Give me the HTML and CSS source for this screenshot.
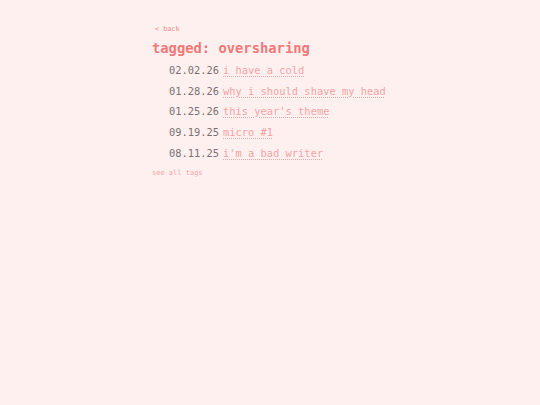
FILE: index.html
```html
<!DOCTYPE html>
<html>
<head>
<meta charset="utf-8">
<link rel="stylesheet" href="styles.css">
</head>
<body>
<main class="page">
  <a class="back" href="#">&lt; back</a>
  <h1 class="title">tagged: oversharing</h1>
  <ul class="posts">
    <li class="post"><span class="date">02.02.26</span><a class="link" href="#">i have a cold</a></li>
    <li class="post"><span class="date">01.28.26</span><a class="link" href="#">why i should shave my head</a></li>
    <li class="post"><span class="date">01.25.26</span><a class="link" href="#">this year's theme</a></li>
    <li class="post"><span class="date">09.19.25</span><a class="link" href="#">micro #1</a></li>
    <li class="post"><span class="date">08.11.25</span><a class="link" href="#">i'm a bad writer</a></li>
  </ul>
  <a class="all" href="#">see all tags</a>
</main>
</body>
</html>
```
FILE: styles.css
```css
html, body {
  margin: 0;
  padding: 0;
  background: #fff0f0;
}
body {
  font-family: "DejaVu Sans Mono", "Liberation Mono", monospace;
  width: 540px;
  height: 405px;
}
.page {
  width: 236px;
  margin: 0 auto;
  padding-top: 24px;
  display: flex;
  flex-direction: column;
  align-items: flex-start;
}
.back {
  font-size: 6.8px;
  color: #f08a8a;
  text-decoration: none;
  margin-left: 3px;
  line-height: 10px;
}
.title {
  font-size: 13.8px;
  font-weight: bold;
  color: #f07878;
  margin: 5px 0 0 0;
  line-height: 18px;
}
.posts {
  list-style: none;
  margin: 6px 0 0 0;
  padding: 0 0 0 17px;
  display: flex;
  flex-direction: column;
  gap: 6.7px;
}
.post {
  font-size: 10.4px;
  line-height: 14px;
  display: flex;
  gap: 4px;
}
.date {
  color: #7a7070;
}
.link {
  color: #f4a4a4;
  text-decoration: underline dotted;
  text-underline-offset: 2px;
}
.all {
  font-size: 7px;
  color: #f4a4a4;
  text-decoration: none;
  margin-top: 8px;
  line-height: 10px;
}
```
